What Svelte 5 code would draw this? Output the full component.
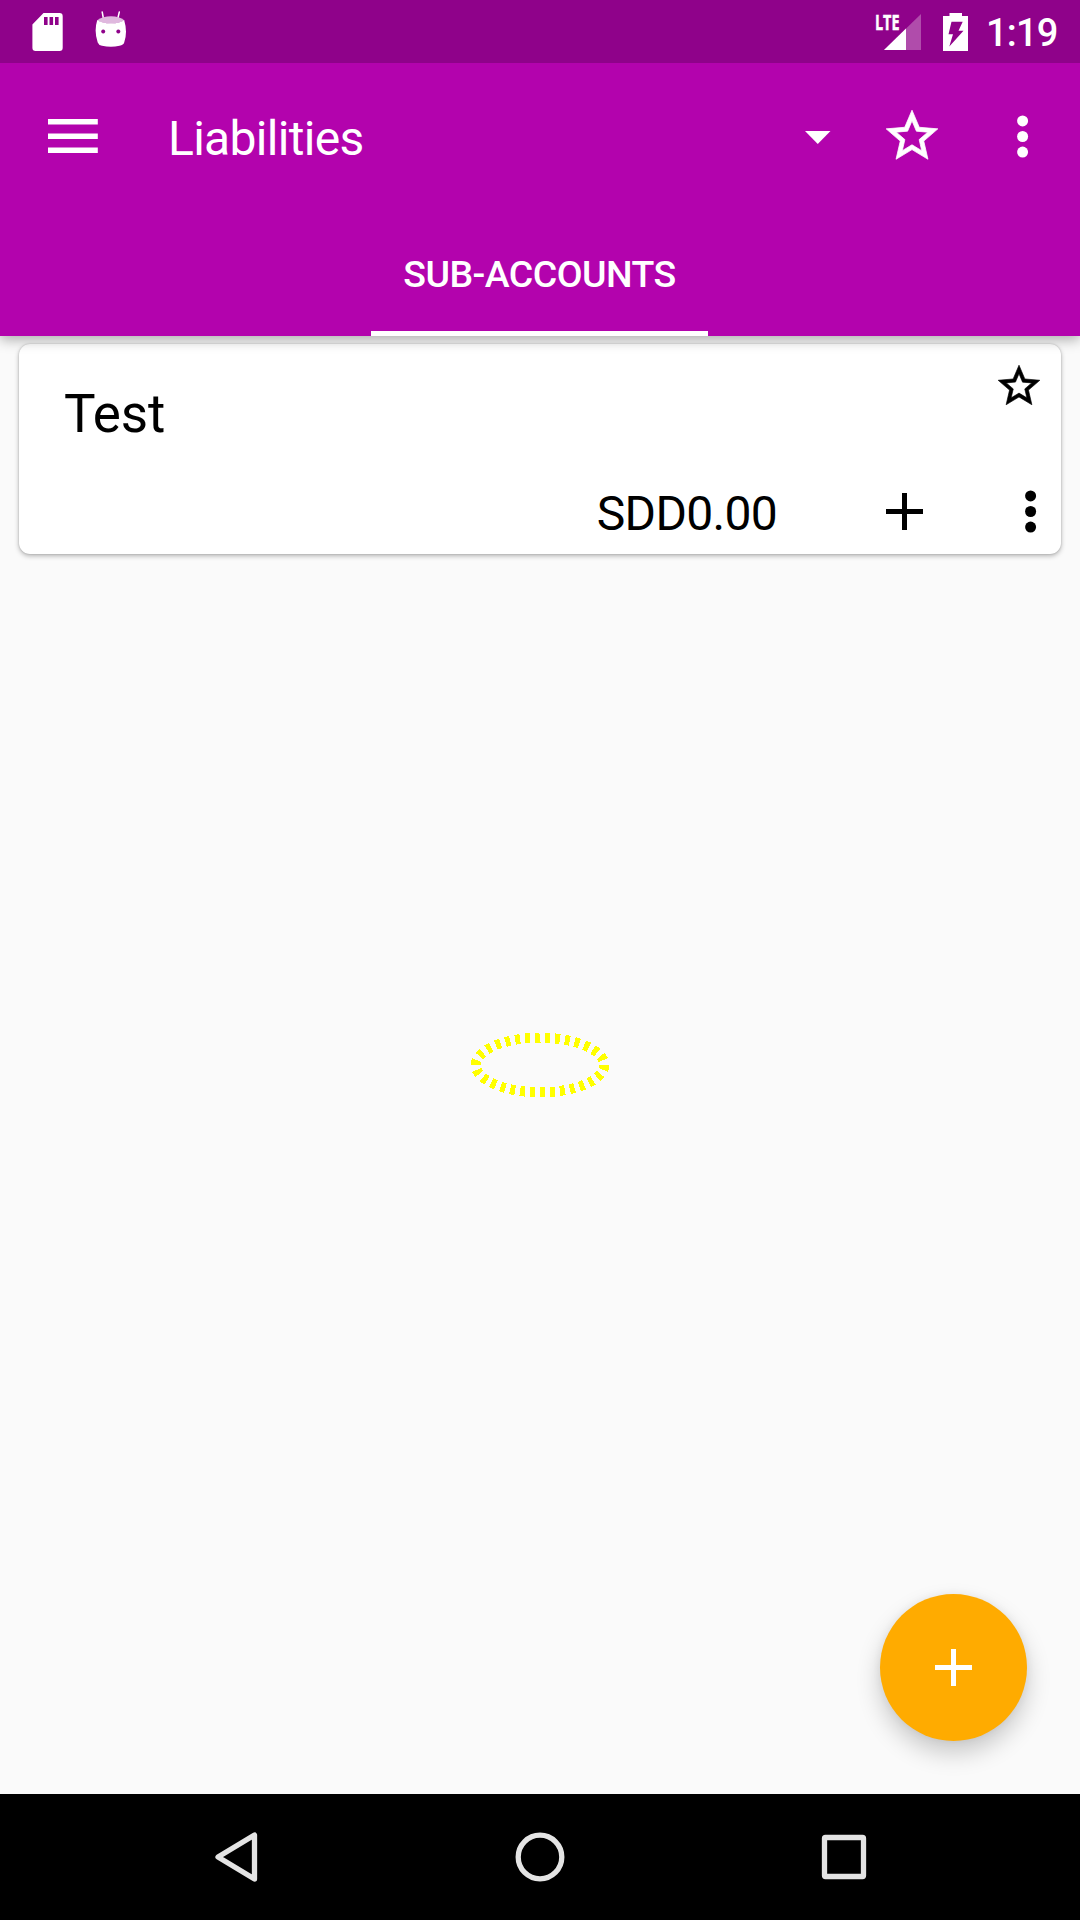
<script>
  const starPath =
    'M22 9.24l-7.19-.62L12 2 9.19 8.63 2 9.24l5.46 4.73L5.82 21 12 17.27 18.18 21l-1.63-7.03L22 9.24zM12 15.4l-3.76 2.27 1-4.28-3.32-2.88 4.38-.38L12 6.1l1.71 4.04 4.38.38-3.32 2.88 1 4.28L12 15.4z';
  const accounts = [{ name: 'Test', balance: 'SDD0.00' }];
</script>

{#snippet star(cls)}
  <svg class={cls} viewBox="0 0 24 24" fill="currentColor" stroke="currentColor" stroke-width="0.3"><path d={starPath} /></svg>
{/snippet}

{#snippet dots()}
  <svg class="dots" viewBox="0 0 12 44" fill="currentColor">
    <circle cx="5.6" cy="5.900" r="5.500" /><circle cx="5.600" cy="21.500" r="5.500" /><circle cx="5.600" cy="37.100" r="5.500" />
  </svg>
{/snippet}

{#snippet plus(cls)}
  <svg class={cls} viewBox="0 0 37 37" fill="currentColor"><path d="M16 0h5v16h16v5H21v16h-5V21H0v-5h16z" /></svg>
{/snippet}

<div class="screen">
  <header class="appbar">
    <div class="status">
      <svg class="sd" width="31" height="38" viewBox="0 0 31 38">
        <path fill="#fff" fill-rule="evenodd" d="M11.500 0H27.500a3.200 3.200 0 0 1 3.200 3.200V34.800a3.200 3.200 0 0 1-3.200 3.200H3.600A3.200 3.200 0 0 1 .4 34.800V11.500zM12 4v8h3.600V4zM17.500 4v8h3.600V4zM23 4v8h3.600V4z" />
      </svg>
      <svg class="droid" width="32" height="38" viewBox="0 0 32 38">
        <path d="M7.200 1L8.500 8M24.300 1L22.700 8" stroke="#fff" stroke-width="1.500" stroke-linecap="round" />
        <path d="M1.800 9.500Q8 5.300 16 5.300T29.600 9.500Q24 12.500 16 12.500T1.800 9.500z" fill="#dfb8de" />
        <path fill="#fff" fill-rule="evenodd" d="M2.200 9.200Q7 12.300 16 12.300T29.200 9.200Q32.800 21 29.200 31.500Q28.500 34 24.500 34.800Q16 36.600 7 34.800Q3.500 34 2.700 31.500Q-1.200 20 2.200 9.200zM8.200 18.500a2 2 0 1 0 .01 0zM23.300 18.500a2 2 0 1 0 .01 0z" />
      </svg>
      <span class="grow"></span>
      <svg class="signal" width="48" height="50" viewBox="-2 -6 48 50">
        <path d="M46 1V37H9z" fill="#b04cab" />
        <path d="M31 15.500V37H9z" fill="#fff" />
        <text x="0" y="17" textLength="24.500" lengthAdjust="spacingAndGlyphs">LTE</text>
      </svg>
      <svg class="battery" width="25" height="38" viewBox="0 0 25 38">
        <path fill="#fff" fill-rule="evenodd" d="M6.500 0H19V3H25V38H0V3H6.500zM8.500 8.700L5.500 21.300H10L6.300 33.500L20.500 17.700H15.500L19.700 8.700z" />
      </svg>
      <span class="clock">1:19</span>
    </div>

    <div class="toolbar">
      <svg class="menu" width="50" height="36" viewBox="0 0 50 36" fill="#fff">
        <path d="M0 0h49.800v5.500H0zM0 14.400h49.800v5.500H0zM0 28.600h49.800v5.500H0z" />
      </svg>
      <h1>Liabilities</h1>
      <svg class="caret" width="26" height="13" viewBox="0 0 26 13"><path d="M0 0h25.500L12.750 13z" fill="#fff" /></svg>
      {@render star('star-lg')}
      {@render dots()}
    </div>

    <nav class="tabs"><span class="tab">SUB-ACCOUNTS</span></nav>
  </header>

  <main>
    {#each accounts as account}
      <article class="card">
        <div class="top">
          <h2>{account.name}</h2>
          {@render star('star-sm')}
        </div>
        <div class="bottom">
          <span class="balance">{account.balance}</span>
          {@render plus('add')}
          {@render dots()}
        </div>
      </article>
    {/each}

    <svg class="ring" width="150" height="76" viewBox="0 0 150 76">
      <ellipse cx="75" cy="38" rx="64.300" ry="27.300" pathLength="300" />
    </svg>

    <button class="fab" aria-label="Add account">{@render plus('fab-plus')}</button>
  </main>

  <footer>
    <svg width="50" height="54" viewBox="0 0 50 54"><path d="M41.500 5V49L5 27z" /></svg>
    <svg width="54" height="54" viewBox="0 0 54 54"><circle cx="27" cy="27" r="21.800" /></svg>
    <svg width="54" height="54" viewBox="0 0 54 54"><rect x="7.500" y="7.500" width="39" height="39" rx="1" /></svg>
  </footer>
</div>

<style>
  :global(body) { margin: 0; }
  .screen {
    width: 1080px;
    height: 1920px;
    display: flex;
    flex-direction: column;
    background: #fafafa;
    font-family: Roboto, sans-serif;
    overflow: hidden;
  }
  svg { display: block; flex: none; }
  h1, h2 { margin: 0; font-weight: 400; }

  .appbar {
    position: relative;
    z-index: 1;
    height: 336px;
    background: #b303ad;
    color: #fff;
    box-shadow: 0 4px 12px rgba(0, 0, 0, 0.3);
  }
  .status {
    height: 63px;
    box-sizing: border-box;
    padding: 0 21px 0 32px;
    display: flex;
    align-items: center;
    background: #8f028a;
  }
  .droid { margin-left: 32px; margin-top: -3px; }
  .grow { flex: 1; }
  .signal { margin-right: 22px; overflow: visible; }
  .signal text { font: 700 22px 'Open Sans', sans-serif; fill: #fff; stroke: #fff; stroke-width: 0.5px; }
  .clock {
    width: 73px;
    margin-left: 18px;
    padding-top: 3px;
    font-size: 38px;
    line-height: 44px;
    font-weight: 500;
    letter-spacing: -0.8px;
    white-space: nowrap;
  }

  .toolbar {
    height: 147px;
    box-sizing: border-box;
    padding: 0 51px 0 48px;
    display: flex;
    align-items: center;
  }
  h1 { flex: 1; margin-left: 70px; padding-top: 5px; font-size: 48px; line-height: 56px; letter-spacing: -0.7px; }
  .caret { margin-top: 2px; }
  .star-lg { width: 62px; height: 62px; margin: -2px 74px 0 50px; }
  .dots { width: 12px; height: 44px; }

  .tabs { height: 126px; padding-right: 1px; display: flex; justify-content: center; }
  .tab {
    width: 337px;
    box-sizing: border-box;
    border-bottom: 5px solid #fff;
    text-align: center;
    font-size: 37.5px;
    line-height: 128px;
    font-weight: 500;
    letter-spacing: -0.55px;
  }

  main { flex: 1; position: relative; padding: 8px 19px; }
  .card {
    height: 210px;
    box-sizing: border-box;
    display: flex;
    flex-direction: column;
    justify-content: space-between;
    border-radius: 11px;
    background: #fff;
    color: #000;
    box-shadow: 0 2px 5px rgba(0, 0, 0, 0.28), 0 0 2px rgba(0, 0, 0, 0.2);
  }
  .top { display: flex; justify-content: space-between; padding: 17px 17px 0 45px; }
  h2 { margin-top: 22px; font-size: 53px; line-height: 62px; letter-spacing: -0.2px; }
  .star-sm { width: 50px; height: 50px; }
  .bottom { display: flex; align-items: center; justify-content: flex-end; padding: 0 24.5px 12.5px 0; }
  .balance { font-size: 48px; line-height: 56px; padding-top: 4px; margin-right: 109px; letter-spacing: -0.7px; }
  .add { width: 37px; height: 37px; margin-right: 101.5px; }

  .ring { position: absolute; left: 465px; top: 691px; }
  .ring ellipse {
    fill: none;
    stroke: #ff0;
    stroke-width: 10;
    stroke-dasharray: 5 5;
    shape-rendering: crispEdges;
  }

  .fab {
    position: absolute;
    right: 53px;
    bottom: 53px;
    width: 147px;
    height: 147px;
    padding: 0;
    border: 0;
    border-radius: 50%;
    display: grid;
    place-items: center;
    background: #ffab00;
    color: #fff;
    box-shadow: 0 12px 24px rgba(0, 0, 0, 0.2), 0 0 8px rgba(0, 0, 0, 0.06);
  }
  .fab-plus { width: 37px; height: 37px; }

  footer {
    height: 126px;
    display: flex;
    align-items: center;
    justify-content: space-between;
    box-sizing: border-box;
    padding: 0 209px 0 213px;
    background: #000;
  }
  footer path, footer circle, footer rect { fill: none; stroke: #e4e4e4; stroke-width: 5.3; stroke-linejoin: round; }
</style>
